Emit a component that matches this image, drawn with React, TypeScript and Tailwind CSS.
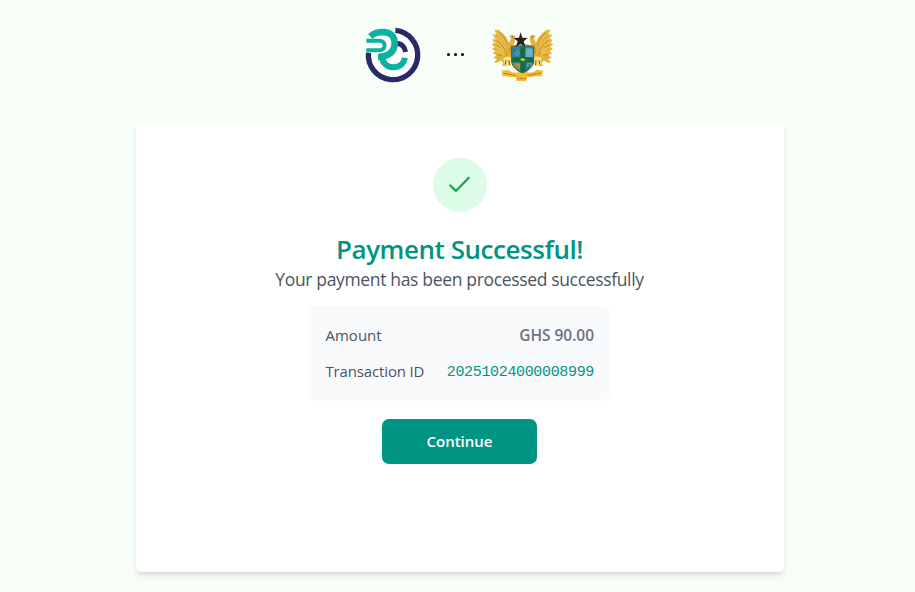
import React from "react";

function CompanyLogo() {
  return (
    <svg viewBox="0 0 198 198" className="h-[66px] w-[66px]" fill="none">
      <circle cx="99" cy="99" r="70" fill="#fff" />
      <path d="M106 25.3A74 74 0 1 1 25.4 92" stroke="#2b2a69" strokeWidth="16" />
      <path d="M112 64C126 66 134 76 137 90" stroke="#2b2a69" strokeWidth="15" />
      <path d="M31 43C44 31 58 30 72 30C94 31 104 46 104 64C104 86 90 104 54 105" stroke="#0bb39e" strokeWidth="20" />
      <path d="M65 103C69 127 84 137 102 136C120 135 132 124 135 107" stroke="#0bb39e" strokeWidth="18" />
      <path d="M19 56H58C79 56 79 85 58 85H19" stroke="#0bb39e" strokeWidth="12" />
    </svg>
  );
}

function Eagle() {
  return (
    <g transform="translate(0 -7) scale(1 1.05)">
      <path d="M26 30L36 29L50 39L62 52L69 67L76 52L69 48L77 43L87 47L88 56L85 66L80 78L81 91L76 103L79 124L70 130L60 133L48 132L52 124L46 117L33 123L24 122L33 112L22 110L31 101L20 96L28 90L18 83L28 78L17 70L27 67L18 57L29 56L20 42L32 43Z" fill="#e2b23b" />
      <path d="M30 34L49 51L62 73M24 48L42 62L56 81M23 62L40 73L53 88M25 76L42 84L52 95M28 90L43 94L52 102" stroke="#ecc654" strokeWidth="4" />
      <path d="M39 36L54 52L65 72M32 58L46 70L57 86M31 72L46 82M33 100L48 102M58 91L64 108L66 122M74 74L70 96" stroke="#bd8428" strokeWidth="2.5" />
      <path d="M52 110Q65 101 76 108L77 128L67 134L56 130Z" fill="#fae486" />
      <path d="M60 116L58 128M69 116L70 130" stroke="#6b491d" strokeWidth="3" />
      <circle cx="79" cy="49" r="1.8" fill="#59401b" />
    </g>
  );
}

function CoatOfArms() {
  return (
    <svg viewBox="0 0 216 198" className="h-[66px] w-[72px]" fill="none">
      <Eagle />
      <g transform="translate(219 0) scale(-1 1)"><Eagle /></g>
      <path d="M77 74Q109 67 143 74V120Q140 140 110 154Q81 142 77 120Z" fill="#2c83a9" stroke="#5e552c" strokeWidth="3" />
      <path d="M118 79H140V105H118Z" fill="#67afd0" />
      <path d="M80 122H103V145Q85 139 80 122Z" fill="#a98334" />
      <path d="M118 121H140Q135 139 118 146Z" fill="#287b96" />
      <path d="M103 74H118V154H103ZM79 106H142V121H79Z" fill="#176c38" />
      <path d="M86 97L98 84M91 101L101 91M122 98L131 86L136 97M91 132L97 126L101 136M125 135V125H135V134" stroke="#9ab39a" strokeWidth="2.5" />
      <path d="M102 114L108 108L119 113L112 118Z" fill="#d8be51" />
      <path d="M76 73Q109 64 144 73" stroke="#8f823f" strokeWidth="4" />
      <path d="M104 31L109 47L125 48L113 58L118 74L104 65L90 74L95 58L83 48L99 47Z" fill="#252016" />
      <path d="M47 146L65 143Q85 157 100 150Q109 157 120 150Q137 157 153 143L172 146L166 164L149 162Q136 167 124 164L121 177H92L89 165Q72 167 61 162L50 164Z" fill="#f0bd35" />
      <path d="M53 154L89 160M95 170H119M125 160L164 153" stroke="#b75d27" strokeWidth="3" strokeDasharray="5 2" />
    </svg>
  );
}

export default function App() {
  return (
    <main className="flex h-[592px] w-full flex-col items-center overflow-hidden bg-[#f7fdf7] pl-[4px] pt-[22px] font-['Open_Sans','Noto_Sans',sans-serif]">
      <header className="mr-[2px] flex h-[66px] w-[198px] items-center">
        <CompanyLogo />
        <div className="flex w-[60px] items-center justify-center gap-[4px] pb-px">
          <span className="size-[3px] rounded-full bg-black" />
          <span className="size-[3px] rounded-full bg-black" />
          <span className="size-[3px] rounded-full bg-black" />
        </div>
        <CoatOfArms />
      </header>

      <section className="ml-px mt-[34px] flex h-[450px] w-[648px] shrink-0 flex-col items-center rounded-[5px] bg-white pr-px pt-9 shadow-[0_4px_7px_-1px_rgba(0,0,0,0.1),0_2px_4px_-2px_rgba(0,0,0,0.1)]">
        <div className="flex size-[54px] shrink-0 items-center justify-center rounded-full bg-[#dcfce7]">
          <svg viewBox="0 0 27 27" className="size-[27px]" fill="none" stroke="#16a34a" strokeWidth="2.2" strokeLinecap="round" strokeLinejoin="round">
            <path d="M4.3 13.5L9.8 18.9L22.8 5.8" />
          </svg>
        </div>
        <h1 className="mt-[20px] h-[35px] whitespace-nowrap text-[26px] font-semibold leading-[34px] tracking-[-0.45px] text-[#009483]">Payment Successful!</h1>
        <p className="h-[25px] whitespace-nowrap text-[17.5px] leading-[25px] tracking-[-0.34px] text-[#4b5563]">Your payment has been processed successfully</p>

        <div className="mt-[14px] flex h-[95px] w-[303px] shrink-0 flex-col justify-center gap-[9px] rounded-[9px] bg-[#f9fafc] pl-[17.5px] pr-[17px] text-[15px] text-[#4b5563]">
          <div className="flex h-[27px] items-center justify-between">
            <span>Amount</span>
            <span className="text-[15.5px] font-semibold tracking-[-0.05px] text-[#6b7280]">GHS 90.00</span>
          </div>
          <div className="flex h-[27px] items-center justify-between">
            <span className="tracking-[-0.15px]">Transaction ID</span>
            <span className="pt-[3px] font-['Liberation_Mono',monospace] text-[15px] tracking-[-0.34px] text-[#009483]">20251024000008999</span>
          </div>
        </div>

        <button className="mt-[18px] h-[45px] w-[155px] shrink-0 rounded-[7px] bg-[#009483] text-[15px] font-semibold text-white">Continue</button>
      </section>
    </main>
  );
}
